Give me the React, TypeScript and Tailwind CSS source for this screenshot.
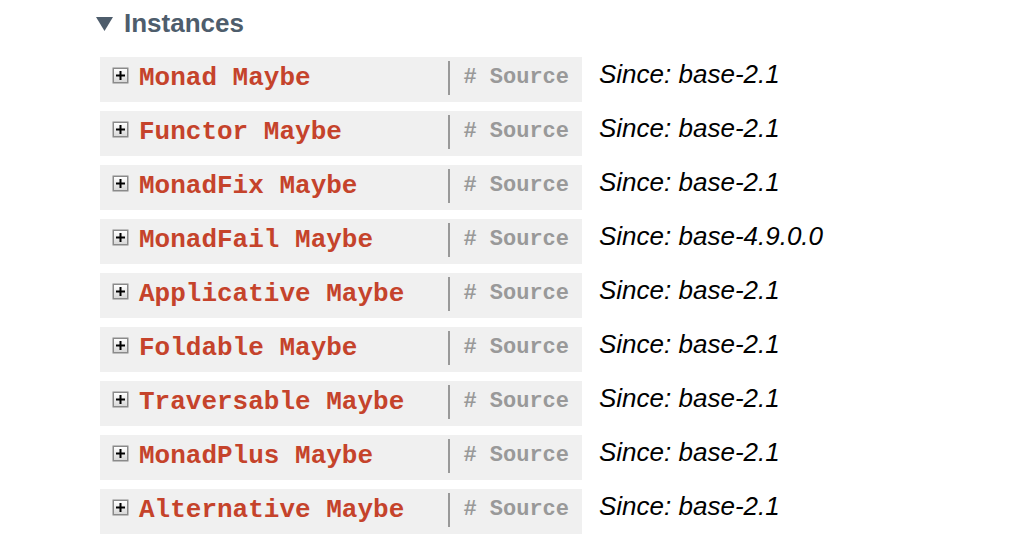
const instances = [
  { name: "Monad", since: "base-2.1" },
  { name: "Functor", since: "base-2.1" },
  { name: "MonadFix", since: "base-2.1" },
  { name: "MonadFail", since: "base-4.9.0.0" },
  { name: "Applicative", since: "base-2.1" },
  { name: "Foldable", since: "base-2.1" },
  { name: "Traversable", since: "base-2.1" },
  { name: "MonadPlus", since: "base-2.1" },
  { name: "Alternative", since: "base-2.1" },
];

function PlusBox() {
  return (
    <svg width="17" height="17" viewBox="0 0 17 17" className="shrink-0">
      <defs>
        <linearGradient id="pb" x1="0" y1="0" x2="0" y2="1">
          <stop offset="0" stopColor="#ffffff" />
          <stop offset="1" stopColor="#d8d8d8" />
        </linearGradient>
      </defs>
      <rect x="0.5" y="0.5" width="16" height="16" fill="#8a8a8a" />
      <rect x="2" y="2" width="13" height="13" fill="url(#pb)" />
      <rect x="4" y="7.5" width="9" height="2" fill="#000" />
      <rect x="7.5" y="4" width="2" height="9" fill="#000" />
    </svg>
  );
}

export default function App() {
  return (
    <div className="w-[1030px] h-[541px] bg-white overflow-hidden font-['Liberation_Sans',Arial,sans-serif]">
      {/* Titulo */}
      <div className="flex items-start pt-[7px] pl-[96px]">
        <svg width="17" height="14" viewBox="0 0 17 14" className="mt-[10px]">
          <polygon points="0,0 17,0 8.5,14" fill="#4e5d6c" />
        </svg>
        <h2 className="ml-[11px] text-[26px] leading-[32px] font-bold text-[#4e5d6c]">
          Instances
        </h2>
      </div>

      <div className="mt-[18px] ml-[100px] flex flex-col gap-[9px]">
        {instances.map((inst) => (
          <div key={inst.name} className="flex items-start">
            <div className="w-[482px] h-[45px] bg-[#f0f0f0] flex items-start">
              <div className="ml-[12px] mt-[10px]">
                <PlusBox />
              </div>
              <span className="ml-[10px] mt-[6px] text-[26px] leading-[30px] font-bold text-[#c5432b] font-['Liberation_Mono','Courier_New',monospace] whitespace-pre">
                {inst.name} Maybe
              </span>
              <a className="ml-auto mr-[13px] mt-[4px] h-[34px] border-l-2 border-[#999] pl-[13px] text-[22px] leading-[33px] font-bold text-[#999] font-['Liberation_Mono','Courier_New',monospace] whitespace-pre">
                # Source
              </a>
            </div>
            <span className="ml-[17px] text-[26px] leading-[35px] italic text-black">
              Since: {inst.since}
            </span>
          </div>
        ))}
      </div>
    </div>
  );
}
